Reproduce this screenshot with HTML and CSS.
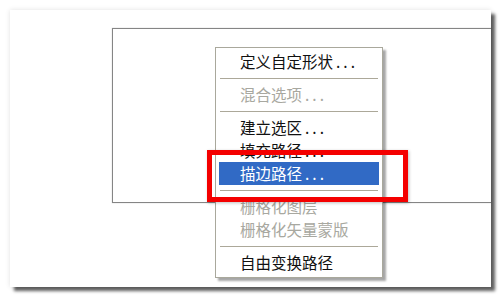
FILE: index.html
```html
<!DOCTYPE html>
<html lang="zh-CN">
<head>
<meta charset="utf-8">
<title>路径菜单</title>
<link rel="stylesheet" href="styles.css">
</head>
<body>
<div class="page">
  <div class="photo">
    <div class="canvas"></div>
    <div class="menu">
      <div class="item">定义自定形状<span class="dots">...</span></div>
      <div class="sep"></div>
      <div class="item disabled">混合选项<span class="dots">...</span></div>
      <div class="sep"></div>
      <div class="item">建立选区<span class="dots">...</span></div>
      <div class="item">填充路径<span class="dots">...</span></div>
      <div class="item active">描边路径<span class="dots">...</span></div>
      <div class="sep"></div>
      <div class="item disabled">栅格化图层</div>
      <div class="item disabled">栅格化矢量蒙版</div>
      <div class="sep"></div>
      <div class="item">自由变换路径</div>
    </div>
    <div class="mark"></div>
  </div>
</div>
</body>
</html>
```

FILE: styles.css
```css
html, body {
  margin: 0;
  padding: 0;
  background: #ffffff;
}

.page {
  width: 503px;
  height: 297px;
  padding: 10px 0 0 10px;
  box-sizing: border-box;
}

.photo {
  position: relative;
  width: 481px;
  height: 277px;
  padding-top: 18px;
  box-sizing: border-box;
  background: #ffffff;
  box-shadow: 4px 4px 3px rgba(0, 0, 0, 0.62), 0 0 5px rgba(0, 0, 0, 0.12);
}

.canvas {
  margin-left: 102px;
  height: 173px;
  border: 1px solid #858585;
  border-right: none;
  box-shadow: 0 0 1px rgba(0, 0, 0, 0.25);
}

.menu {
  position: absolute;
  left: 205px;
  top: 37px;
  width: 166px;
  padding: 2px 0 3px;
  background: #ffffff;
  border: 1px solid #a9a89c;
  box-shadow: 3px 3px 2px rgba(0, 0, 0, 0.35);
  display: flex;
  flex-direction: column;
  font-family: "Noto Sans CJK SC", "Noto Sans", sans-serif;
  font-size: 15.5px;
  color: #111111;
}

.item {
  height: 23px;
  line-height: 23px;
  margin: 0 3px;
  padding-left: 21px;
  white-space: nowrap;
}

.item.disabled {
  color: #a8a8a0;
}

.item.active {
  background: #316ac5;
  color: #ffffff;
}

.dots {
  letter-spacing: 3px;
  margin-left: 3px;
}

.sep {
  height: 1px;
  margin: 5px 4px 4px;
  background: #aca899;
}

.mark {
  position: absolute;
  left: 197px;
  top: 140px;
  width: 201px;
  height: 52px;
  box-sizing: border-box;
  border: 5px solid #f40000;
  box-shadow: 1px 1px 3px rgba(0, 0, 0, 0.25);
}
```
